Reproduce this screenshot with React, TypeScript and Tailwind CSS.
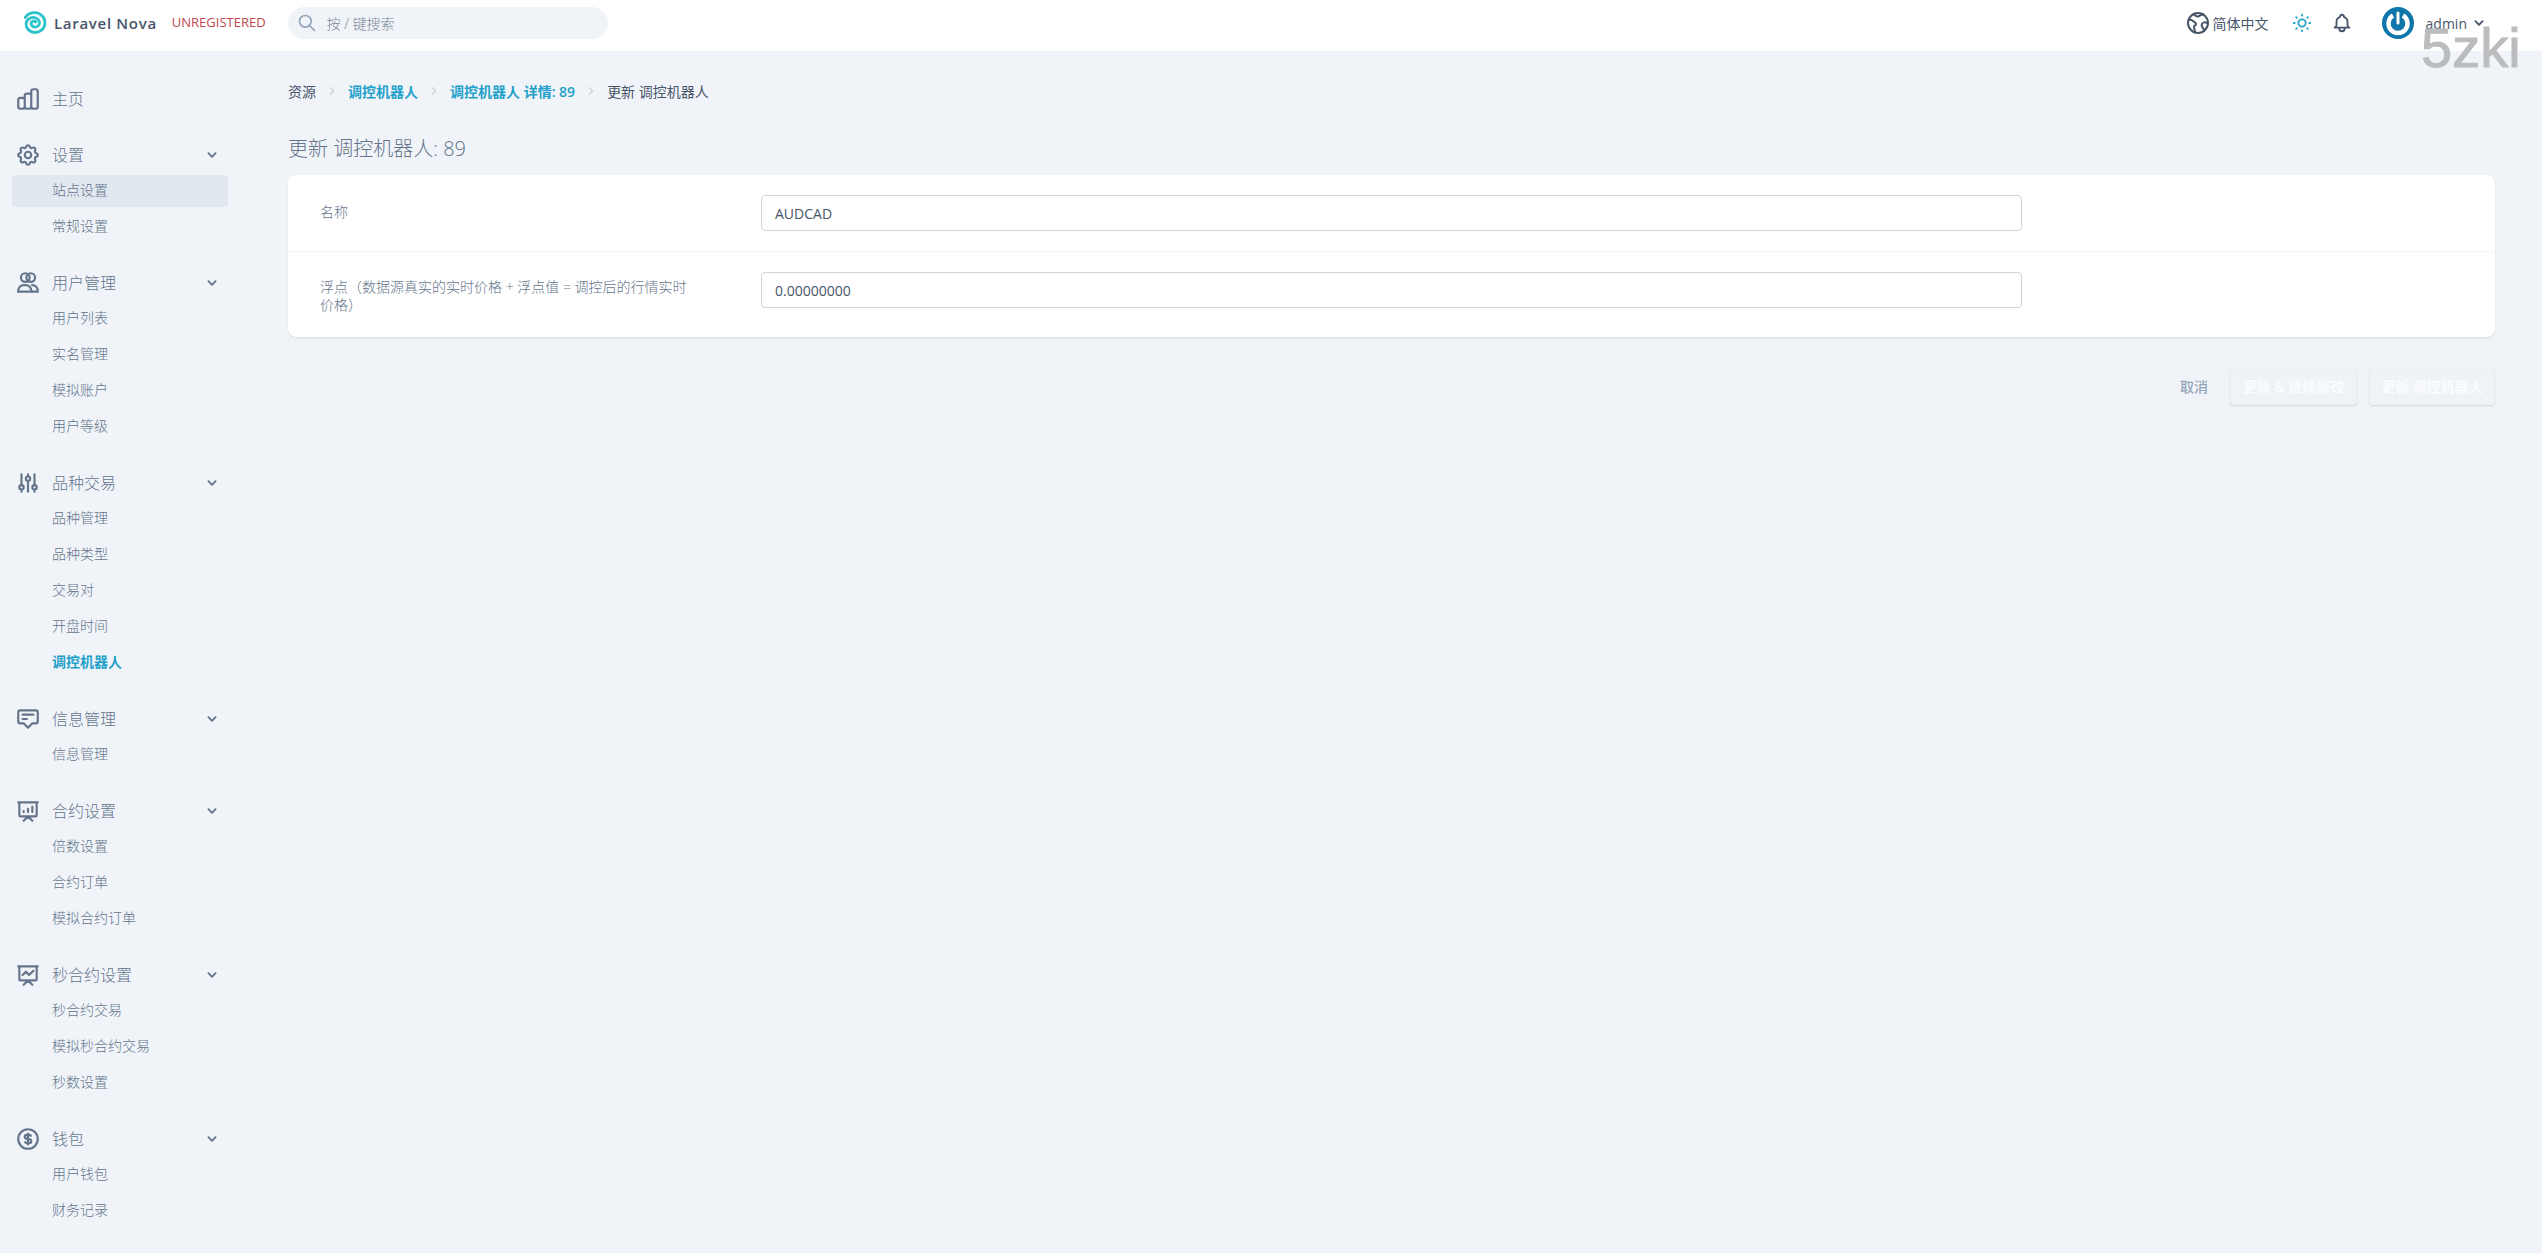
import React from 'react';
import { HiOutlineChartBar, HiOutlineCog, HiOutlineAdjustments, HiOutlineAnnotation, HiOutlinePresentationChartBar, HiOutlinePresentationChartLine, HiOutlineCurrencyDollar, HiOutlineSearch, HiOutlineBell, HiOutlineSun, HiChevronDown, HiChevronRight } from 'react-icons/hi';

const font = "font-['Open_Sans','Noto_Sans_CJK_SC',sans-serif]";

const UsersIcon = ({ className }: { className?: string }) => (
  <svg viewBox="0 0 24 24" fill="none" stroke="currentColor" strokeWidth={2} className={className}>
    <circle cx="9.5" cy="7" r="4" />
    <circle cx="14.5" cy="7" r="4" />
    <path d="M3 20v-1a5 5 0 0 1 5-5h2a5 5 0 0 1 5 5v1H3Z" />
    <path d="M15 14h1a5 5 0 0 1 5 5v1h-6" />
  </svg>
);

const GlobeIcon = ({ className }: { className?: string }) => (
  <svg viewBox="0 0 24 24" fill="none" stroke="currentColor" strokeWidth={2} strokeLinecap="round" strokeLinejoin="round" className={className}>
    <circle cx="12" cy="12" r="10" />
    <path d="M3 9c2-1 3 0 4 1s3 1 3 3-2 1-2 3 1 3 1 5" />
    <path d="M8 3c1 2 3 3 5 2s3-1 4-2" />
    <path d="M21 12c-2-1-4-1-5 1s0 3 1 4 1 2 1 3" />
  </svg>
);

const Logo = () => (
  <svg viewBox="0 0 24 24" fill="none" className="w-[26px] h-[26px] shrink-0 rotate-[-40deg]" stroke="#2cc4c8" strokeWidth={2.6} strokeLinecap="round">
    <path d="M14 12.5A2.5 2.5 0 0 0 9 12.5A4 4 0 0 0 17 12.5A6.5 6.5 0 0 0 4 12.5A9 9 0 0 0 22 12.5A10 10 0 0 0 9 3" />
  </svg>
);

const Avatar = () => (
  <svg viewBox="0 0 32 32" className="ml-[29px] w-[32px] h-[32px] shrink-0">
    <circle cx="16" cy="16" r="16" fill="#0e76a8" />
    <path d="M11 8.5A9.5 9.5 0 1 0 21 8.5" fill="none" stroke="#fff" strokeWidth={4.5} />
    <path d="M16 6v10" stroke="#fff" strokeWidth={3} strokeLinecap="round" />
  </svg>
);

const groups = [
  { label: '主页', icon: HiOutlineChartBar, items: [] as string[] },
  { label: '设置', icon: HiOutlineCog, items: ['站点设置', '常规设置'] },
  { label: '用户管理', icon: UsersIcon, items: ['用户列表', '实名管理', '模拟账户', '用户等级'] },
  { label: '品种交易', icon: HiOutlineAdjustments, items: ['品种管理', '品种类型', '交易对', '开盘时间', '调控机器人'] },
  { label: '信息管理', icon: HiOutlineAnnotation, items: ['信息管理'] },
  { label: '合约设置', icon: HiOutlinePresentationChartBar, items: ['倍数设置', '合约订单', '模拟合约订单'] },
  { label: '秒合约设置', icon: HiOutlinePresentationChartLine, items: ['秒合约交易', '模拟秒合约交易', '秒数设置'] },
  { label: '钱包', icon: HiOutlineCurrencyDollar, items: ['用户钱包', '财务记录'] },
];

const Crumb = () => <HiChevronRight className="w-[16px] h-[16px] mx-[8px] text-gray-300" />;

export default function App() {
  return (
    <div className={`${font} relative min-h-[1253px] bg-[#f0f4f9] text-[#64748b] overflow-hidden`}>
      <header className="h-[51px] bg-white flex items-center pb-[5px] pl-[21px] pr-[54px]">
        <Logo />
        <span className="ml-[7px] text-[15px] font-semibold text-[#475569] tracking-[0.7px]">Laravel Nova</span>
        <span className="ml-[15px] text-[13px] text-[#c2474f]">UNREGISTERED</span>
        <div className="ml-[22px] w-[320px] h-[32px] rounded-full bg-[#f0f4f9] flex items-center pl-[9px]">
          <HiOutlineSearch className="w-[20px] h-[20px] text-[#94a3b8]" />
          <span className="ml-[10px] text-[14px] font-light text-[#7b8794]">按 / 键搜索</span>
        </div>
        <div className="ml-auto flex items-center">
          <GlobeIcon className="w-[24px] h-[24px] text-[#475569]" />
          <span className="ml-[3px] text-[14px] text-[#475569]">简体中文</span>
          <HiOutlineSun className="ml-[22px] w-[22px] h-[22px] text-[#22a7c9]" />
          <HiOutlineBell className="ml-[18px] w-[22px] h-[22px] text-[#475569]" />
          <Avatar />
          <span className="ml-[12px] text-[14px] text-[#475569]">admin</span>
          <HiChevronDown className="ml-[3px] w-[18px] h-[18px] text-[#475569]" />
        </div>
      </header>

      <div className="absolute top-[20px] left-[2421px] font-['Liberation_Sans',sans-serif] text-[56px] leading-none text-[#bbbcbe] [-webkit-text-stroke:1px_#bbbcbe]">5zki</div>

      <div className="flex">
        <nav className="w-[288px] shrink-0 pt-[30px] pl-[12px] pr-[60px] flex flex-col gap-[20px]">
          {groups.map((g) => {
            const Icon = g.icon;
            return (
              <div key={g.label}>
                <div className="h-[36px] flex items-center pl-[3px] pr-[7px]">
                  <Icon className="w-[26px] h-[26px] text-[#64748b]" />
                  <span className="ml-[11px] text-[16px] font-light">{g.label}</span>
                  {g.items.length > 0 && <HiChevronDown className="ml-auto w-[18px] h-[18px]" />}
                </div>
                {g.items.map((item) => (
                  <div key={item} className={`h-[36px] flex items-center pb-[4px] pl-[40px] text-[14px] font-light ${item === '站点设置' ? 'relative' : ''} ${item === '调控机器人' ? 'text-[#22a0c9] font-semibold' : ''}`}>
                    {item === '站点设置' && <div className="absolute left-0 right-0 top-[2px] h-[32px] rounded-[4px] bg-[#e2e8f0]" />}
                    <span className="relative">{item}</span>
                  </div>
                ))}
              </div>
            );
          })}
        </nav>

        <main className="flex-1 pr-[47px] pt-[28px]">
          <div className="flex items-center h-[24px] text-[14px] text-[#475569]">
            <span>资源</span>
            <Crumb />
            <span className="font-semibold text-[#22a0c9]">调控机器人</span>
            <Crumb />
            <span className="font-semibold text-[#22a0c9]">调控机器人 详情: 89</span>
            <Crumb />
            <span>更新 调控机器人</span>
          </div>
          <h1 className="mt-[32px] text-[20px] leading-[28px] font-light">更新 调控机器人: 89</h1>
          <div className="mt-[12px] bg-white rounded-[8px] shadow-[0_1px_2px_rgba(0,0,0,0.1)]">
            <div className="h-[77px] flex items-center pl-[32px] border-b border-[#f3f5f8]">
              <label className="w-[441px] text-[14px] font-light -mt-[4px]">名称</label>
              <div className="w-[1261px] h-[36px] border border-[#cfd4da] rounded-[4px] flex items-center px-[13px] text-[14px] text-[#475569]">AUDCAD</div>
            </div>
            <div className="h-[85px] flex items-center pl-[32px]">
              <label className="w-[441px] pr-[71px] mt-[2px] text-[14px] leading-[18px] font-light">浮点（数据源真实的实时价格 + 浮点值 = 调控后的行情实时价格）</label>
              <div className="w-[1261px] h-[36px] border border-[#cfd4da] rounded-[4px] flex items-center px-[13px] text-[14px] text-[#475569] -mt-[9px]">0.00000000</div>
            </div>
          </div>
          <div className="mt-[31px] flex items-center justify-end">
            <span className="text-[14px] text-[#94a3b8] font-medium">取消</span>
            <div className="ml-[22px] w-[127px] h-[37px] rounded-[4px] bg-[#eff3f8] border border-[#eceff4] shadow-[0_1px_2px_rgba(0,0,0,0.12)] flex items-center justify-center text-[14px] font-semibold text-[#fbfcfd]">更新 &amp; 继续修改</div>
            <div className="ml-[12px] w-[126px] h-[37px] rounded-[4px] bg-[#eff3f8] border border-[#eceff4] shadow-[0_1px_2px_rgba(0,0,0,0.12)] flex items-center justify-center text-[14px] font-semibold text-[#fbfcfd]">更新 调控机器人</div>
          </div>
        </main>
      </div>
    </div>
  );
}
